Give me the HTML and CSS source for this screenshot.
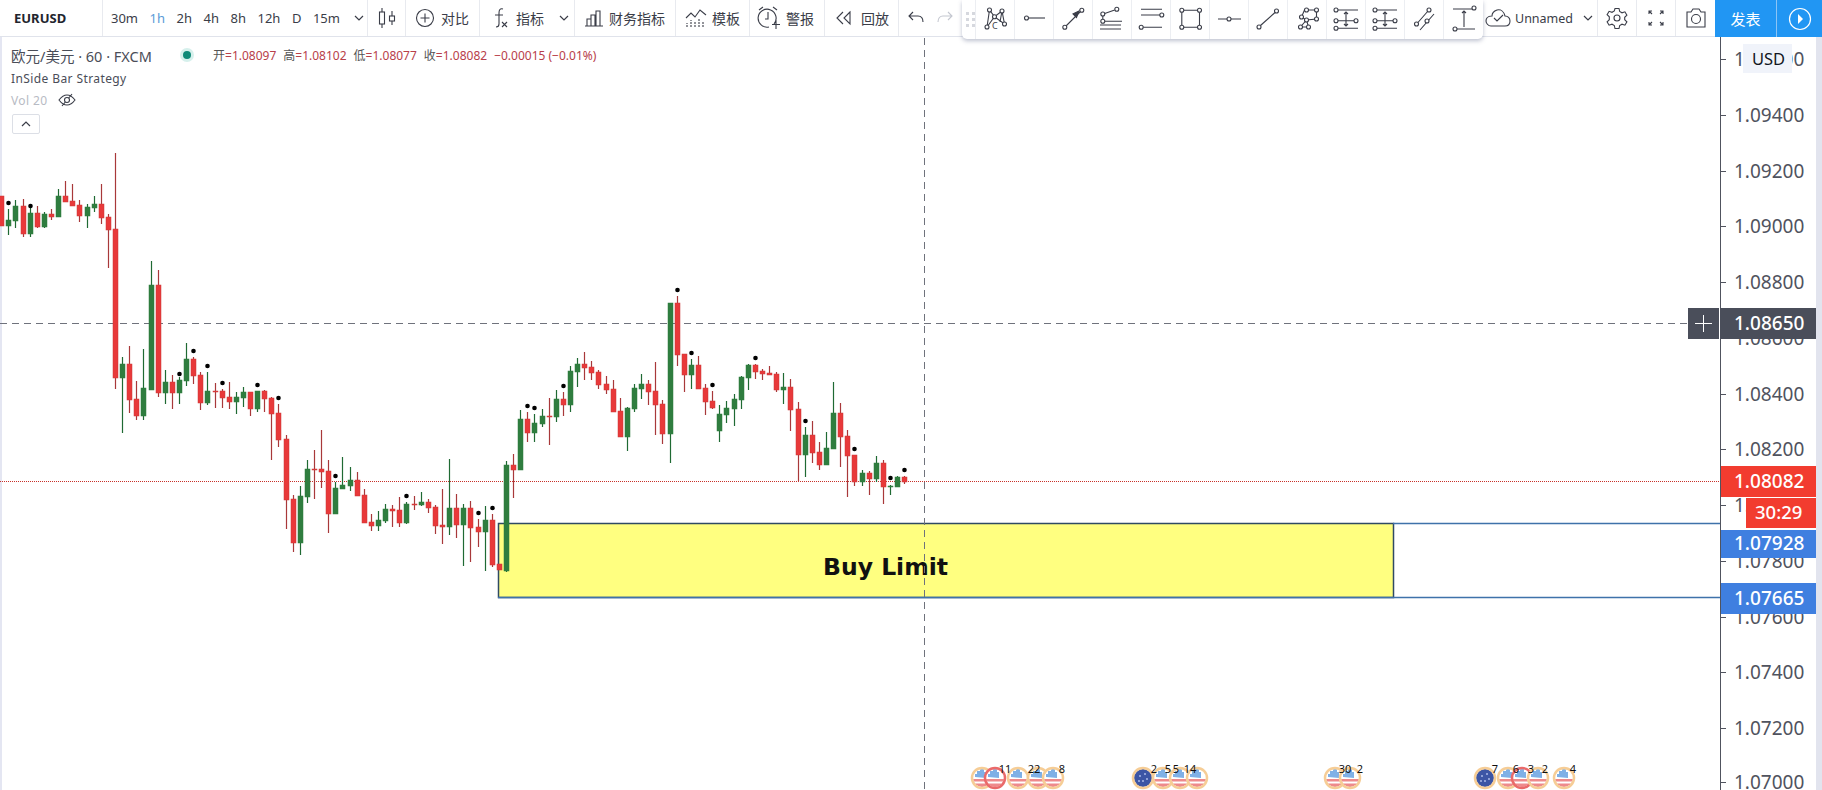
FILE: index.html
```html
<!DOCTYPE html>
<html lang="zh">
<head>
    <meta charset="UTF-8">
    <title>EURUSD</title>
    <link rel="stylesheet" href="styles.css">
</head>
<body>
<div class="header">
    <div class="group sym">EURUSD</div>
    <div class="group tf">
        <span class="tf-item w30">30m</span>
        <span class="tf-item active">1h</span>
        <span class="tf-item">2h</span>
        <span class="tf-item">4h</span>
        <span class="tf-item">8h</span>
        <span class="tf-item">12h</span>
        <span class="tf-item">D</span>
        <span class="tf-item">15m</span>
        <svg class="chev" viewBox="0 0 10 6"><path d="M1 1l4 4 4-4"/></svg>
    </div>
    <div class="group candle">
        <svg class="ic" width="22" height="24" viewBox="0 0 22 24"><path d="M6 2v4M6 18v4M16 5v5M16 15v4"/><rect x="3.5" y="6" width="5" height="12"/><rect x="13.5" y="10" width="5" height="5"/></svg>
    </div>
    <div class="group compare">
        <svg class="ic" width="20" height="20" viewBox="0 0 20 20"><circle cx="10" cy="10" r="8.5"/><path d="M10 5.500v9M5.500 10h9"/></svg>
        <span>对比</span>
    </div>
    <div class="group ind">
        <svg class="ic" width="22" height="24" viewBox="0 0 22 24"><path d="M14 3c-3-1-4 1-4 4v11c0 2-1 3-3 3M6 9h8M13 16l5 5M18 16l-5 5"/></svg>
        <span>指标</span>
        <svg class="chev" viewBox="0 0 10 6"><path d="M1 1l4 4 4-4"/></svg>
    </div>
    <div class="group fin">
        <svg class="ic" width="20" height="20" viewBox="0 0 20 20"><path d="M1 18h18M3 18v-7h4v7M7 18V7h4v11M12 18V3h4v15"/></svg>
        <span>财务指标</span>
    </div>
    <div class="group tmpl">
        <svg class="ic" width="22" height="22" viewBox="0 0 22 22"><path d="M1 11l5-5 4 4 5-7 6 5"/><path d="M2 20v-4M6 20v-7M10 20v-5M14 20v-8M18 20v-5" stroke-dasharray="2 1"/></svg>
        <span>模板</span>
    </div>
    <div class="group alert">
        <svg class="ic" width="26" height="24" viewBox="0 0 26 24"><path d="M17 18a9 9 0 1 0-5 3M11 6v7h-3M2 4l4-3M16 1l4 3M19 14v9M15 18.500h8"/></svg>
        <span>警报</span>
    </div>
    <div class="group replay">
        <svg class="ic" width="18" height="16" viewBox="0 0 18 16"><path d="M8 2L2 8l6 6M15 2L9 8l6 6z"/></svg>
        <span>回放</span>
    </div>
    <div class="group undo">
        <svg class="ic" width="18" height="16" viewBox="0 0 18 16"><path d="M6 2L2 6l4 4M2 6h9c3 0 5 2 5 6"/></svg>
        <svg class="ic off" width="18" height="16" viewBox="0 0 18 16"><path d="M12 2l4 4-4 4M16 6H7c-3 0-5 2-5 6"/></svg>
    </div>
    <div class="spacer"></div>
    <div class="group save">
        <svg class="ic" width="26" height="22" viewBox="0 0 26 22"><path d="M6 19h14c3 0 5-2 5-5s-2-5-5-5c-1-4-4-7-8-6-3 1-5 3-5 6-5 0-6 3-6 5s2 5 5 5zM9 11l3 3 6-6"/></svg>
        <span>Unnamed</span>
        <svg class="chev" viewBox="0 0 10 6"><path d="M1 1l4 4 4-4"/></svg>
    </div>
    <div class="group btn">
        <svg class="ic" width="22" height="22" viewBox="0 0 22 22"><path d="M9 1.500h4l.7 3 2.300 1.300 2.900-1 2 3.400-2.200 2.100v2.400l2.200 2.100-2 3.400-2.900-1-2.300 1.300-.7 3H9l-.7-3-2.300-1.300-2.900 1-2-3.400 2.200-2.100V9.800L1.100 7.700l2-3.400 2.900 1 2.300-1.300z"/><circle cx="11" cy="11" r="3"/></svg>
    </div>
    <div class="group btn">
        <svg class="ic" width="18" height="18" viewBox="0 0 18 18"><path d="M2 5V2h3M13 2h3v3M2 13v3h3M16 13v3h-3M2 2l3 3M16 2l-3 3M2 16l3-3M16 16l-3-3"/></svg>
    </div>
    <div class="group btn last">
        <svg class="ic" width="22" height="20" viewBox="0 0 22 20"><path d="M2 4h4l2-3h6l2 3h4v15H2z"/><circle cx="11" cy="11" r="4.500"/></svg>
    </div>
    <div class="publish">发表</div>
    <div class="play">
        <svg width="24" height="24" viewBox="0 0 24 24"><circle cx="12" cy="12" r="10.500"/><path d="M10 7l5 5-5 5z"/></svg>
    </div>

    <div class="draw-bar">
        <div class="grip"><i></i><i></i><i></i><i></i><i></i><i></i></div>
        <div class="cell"><svg class="ic" viewBox="0 0 30 30"><path d="M9.500 7l5 6.700L22 8l2.500 13-10-7.300L7 24l2.500-17M22 8l-2 11"/><circle cx="9.500" cy="7" r="2"/><circle cx="22" cy="8" r="2"/><circle cx="14.500" cy="13.700" r="2"/><circle cx="24.500" cy="21" r="2"/><circle cx="7" cy="24" r="2"/><text class="ic-c" x="12" y="26">C</text></svg></div>
        <div class="cell"><svg class="ic" viewBox="0 0 30 30"><path d="M9.500 15H26"/><circle cx="7.500" cy="15" r="2"/></svg></div>
        <div class="cell"><svg class="ic" viewBox="0 0 30 30"><path d="M8 23L22.500 8.500"/><path class="solid" d="M21 8l-6 3 3.500 3.500z"/><circle cx="6.800" cy="24.300" r="2"/><circle cx="23.800" cy="7.300" r="2"/></svg></div>
        <div class="cell"><svg class="ic" viewBox="0 0 30 30"><path d="M8 18.300h17M3 22h21M3 26h21M7.700 10.400l10-3.500M5.800 13v3"/><circle cx="5.800" cy="11" r="2"/><circle cx="19.800" cy="6.300" r="2"/><circle cx="5.800" cy="18.300" r="2"/></svg></div>
        <div class="cell"><svg class="ic" viewBox="0 0 30 30"><path d="M5 6.300h21M5 12h19M7 24.300h19"/><circle cx="25.800" cy="12" r="2"/><circle cx="5.200" cy="24.300" r="2"/></svg></div>
        <div class="cell"><svg class="ic" viewBox="0 0 30 30"><path d="M9 7.300h13.500M9 24.300h13.500M6.800 9.300v13M24.500 9.300v13"/><circle cx="6.800" cy="7.300" r="2"/><circle cx="24.500" cy="7.300" r="2"/><circle cx="6.800" cy="24.300" r="2"/><circle cx="24.500" cy="24.300" r="2"/></svg></div>
        <div class="cell"><svg class="ic" viewBox="0 0 30 30"><path d="M4 16h9M17 16h10"/><circle cx="15" cy="16" r="2"/></svg></div>
        <div class="cell"><svg class="ic" viewBox="0 0 30 30"><path d="M7.500 22.500L22 9.500"/><circle cx="6" cy="24" r="2"/><circle cx="23.500" cy="8" r="2"/></svg></div>
        <div class="cell"><svg class="ic" viewBox="0 0 30 30"><path d="M14.500 7h10v9l-10 1-6 7h8l-2-7-5-3 3-7"/><circle cx="9.500" cy="14" r="2"/><circle cx="14.500" cy="7" r="2"/><circle cx="24.500" cy="7" r="2"/><circle cx="24.500" cy="16" r="2"/><circle cx="14.500" cy="17" r="2"/><circle cx="8.500" cy="24" r="2"/><circle cx="16.500" cy="24" r="2"/></svg></div>
        <div class="cell"><svg class="ic" viewBox="0 0 30 30"><path d="M7 7h20M7 17.700h16M7 25.300h20M15 9v14M13 11l2-2 2 2M13 21l2 2 2-2"/><circle cx="5" cy="7" r="2"/><circle cx="5" cy="17.700" r="2"/><circle cx="5" cy="25.300" r="2"/><circle cx="25" cy="17.700" r="2"/></svg></div>
        <div class="cell"><svg class="ic" viewBox="0 0 30 30"><path d="M7 7h20M7 17.700h16M7 25.300h20M15 9v14M13 11l2-2 2 2M13 21l2 2 2-2"/><circle cx="5" cy="7" r="2"/><circle cx="5" cy="17.700" r="2"/><circle cx="5" cy="25.300" r="2"/><circle cx="25" cy="17.700" r="2"/></svg></div>
        <div class="cell"><svg class="ic" viewBox="0 0 30 30"><path d="M8.500 20L19 8M11 27l14-16"/><circle cx="7.500" cy="21" r="2"/><circle cx="20" cy="7" r="2"/><circle cx="18" cy="18" r="2"/></svg></div>
        <div class="cell"><svg class="ic" viewBox="0 0 30 30"><path d="M4 6h19M8 26h18M15 8v16M13 10l2-2 2 2"/><circle cx="25" cy="5" r="2"/><circle cx="6" cy="26" r="2"/></svg></div>
    </div>
</div>

<div class="chart">
    <svg class="plot" width="1822" height="753" viewBox="0 37 1822 753">
        <defs>
            <clipPath id="pin-clip"><circle cx="0" cy="0" r="9"/></clipPath>
            <symbol id="pin-us" overflow="visible">
                <g clip-path="url(#pin-clip)">
                    <rect x="-9" y="-9" width="18" height="18" fill="#fff"/>
                    <path d="M-7-1V-4h2v-3h3v-2h4v3h2v6z" fill="#7fb0e6"/>
                    <rect x="-9" y="1" width="18" height="2.500" fill="#ee8a8c"/>
                    <rect x="-9" y="5.500" width="18" height="3.500" fill="#ee8a8c"/>
                </g>
            </symbol>
            <symbol id="pin-eu" overflow="visible">
                <g clip-path="url(#pin-clip)">
                    <rect x="-9" y="-9" width="18" height="18" fill="#3c55a5"/>
                    <circle cx="-3" cy="-2" r="1" fill="#aab8e8"/><circle cx="2" cy="-4" r="1" fill="#aab8e8"/>
                    <circle cx="4" cy="1" r="1" fill="#aab8e8"/><circle cx="0" cy="3" r="1" fill="#aab8e8"/>
                    <circle cx="-4" cy="3" r="1" fill="#aab8e8"/>
                </g>
            </symbol>
        </defs>

        <rect class="left-edge" x="0" y="37" width="2" height="753"/>

        <!-- buy limit zone -->
        <rect class="zone" x="498.500" y="523.500" width="895" height="74"/>
        <path class="zone-line" d="M1393 523.500H1720M498 597.500H1720"/>
        <text class="zone-text" x="823" y="575">Buy Limit</text>

        <path class="price-line" d="M0 481.500H1720"/>
        <path class="cross" d="M924.500 38V790M0 323.500H1720"/>

        <g id="candles"></g>
        <g id="pins"></g>

        <!-- price scale -->
        <rect class="scale-bg" x="1721" y="37" width="95" height="753"/>
        <rect class="scale-strip" x="1816" y="37" width="6" height="753"/>
        <g id="scale"></g>
        <path class="scale-line" d="M1720.500 37V790"/>

        <rect class="usd-box" x="1743" y="44" width="49" height="29"/>
        <text class="usd" x="1752" y="65">USD</text>

        <rect class="tag dark" x="1688" y="308" width="128" height="31"/>
        <path class="plus" d="M1695 323.500h17M1703.500 315v17"/>
        <path class="tag-sep" d="M1719.500 308V339"/>
        <text class="tag-text" x="1734" y="330">1.08650</text>

        <rect class="tag red" x="1721" y="466" width="95" height="31"/>
        <text class="tag-text" x="1734" y="488">1.08082</text>
        <rect class="tag red" x="1746" y="498" width="70" height="30"/>
        <text class="tag-text small" x="1755" y="519">30:29</text>

        <rect class="tag blue" x="1721" y="530" width="95" height="28"/>
        <text class="tag-text" x="1734" y="550">1.07928</text>
        <rect class="tag blue" x="1721" y="583" width="95" height="31"/>
        <text class="tag-text" x="1734" y="605">1.07665</text>
    </svg>

    <div class="legend">
        <div class="legend-title">
            <span class="pair">欧元/美元 · 60 · FXCM</span>
            <span class="status"></span>
            <span class="ohlc">开<b>=1.08097</b></span>
            <span class="ohlc">高<b>=1.08102</b></span>
            <span class="ohlc">低<b>=1.08077</b></span>
            <span class="ohlc">收<b>=1.08082</b></span>
            <span class="ohlc"><b>−0.00015 (−0.01%)</b></span>
        </div>
        <div class="legend-row">InSide Bar Strategy</div>
        <div class="legend-row vol">Vol 20
            <svg class="ic" width="18" height="14" viewBox="0 0 18 14"><path d="M1 7c3-4 5-5 8-5s5 1 8 5c-3 4-5 5-8 5s-5-1-8-5zM14 1L4 13"/><circle cx="9" cy="7" r="2.500"/></svg>
        </div>
        <div class="collapse"><svg viewBox="0 0 10 6"><path d="M1 5l4-4 4 4"/></svg></div>
    </div>
</div>
<script src="chart.js"></script>
</body>
</html>
```

FILE: styles.css
```css
*{
    box-sizing: border-box;
}
html, body{
    margin: 0;
    height: 100%;
    overflow: hidden;
    background-color: white;
    font-family: "Noto Sans", "Noto Sans CJK SC", sans-serif;
    color: #3a3d48;
}
.header{
    position: relative;
    display: flex;
    height: 37px;
    border-bottom: 1px solid #e0e3eb;
    font-size: 14px;
}
.group{
    display: flex;
    align-items: center;
    height: 36px;
    border-right: 1px solid #e8eaef;
    flex-shrink: 0;
}
.spacer{
    flex: 1;
}
.sym{
    width: 103px;
    padding-left: 14px;
    font-size: 13px;
    font-weight: bold;
    color: #22252e;
}
.tf{
    width: 265px;
    padding-left: 8px;
    font-size: 13px;
}
.tf-item{
    margin-left: 11.500px;
}
.w30{
    margin-left: 0;
}
.active{
    color: #5a9bd8;
}
.chev{
    width: 10px;
    height: 6px;
    margin-left: 14px;
}
.chev path, .collapse path{
    fill: none;
    stroke: #3a3d48;
    stroke-width: 1.200;
}
.ic{
    fill: none;
    stroke: #3a3d48;
    stroke-width: 1.100;
}
.ic circle{
    fill: white;
}
.ic .solid{
    fill: #3a3d48;
}
.ic-c{
    fill: #3a3d48;
    stroke: none;
    font-size: 9px;
}
.off{
    stroke: #c4c7d0;
}
.candle{
    width: 38px;
    justify-content: center;
}
.compare{
    width: 74px;
    padding-left: 9px;
    gap: 6px;
}
.ind{
    width: 95px;
    padding-left: 9px;
    gap: 5px;
}
.ind .chev{
    margin-left: 10px;
}
.fin{
    width: 101px;
    padding-left: 9px;
    gap: 5px;
}
.tmpl{
    width: 74px;
    padding-left: 9px;
    gap: 5px;
}
.alert{
    width: 75px;
    padding-left: 7px;
    gap: 3px;
}
.replay{
    width: 74px;
    padding-left: 10px;
    gap: 8px;
}
.undo{
    width: 64px;
    padding-left: 8px;
    gap: 11px;
    border-right: none;
}
.save{
    width: 115px;
    padding-left: 2px;
    gap: 4px;
    font-size: 12.500px;
}
.save .chev{
    margin-left: 6px;
}
.btn{
    width: 39px;
    justify-content: center;
}
.last{
    border-right: none;
}
.publish{
    display: flex;
    align-items: center;
    justify-content: center;
    width: 62px;
    height: 37px;
    background-color: #2196f3;
    border-right: 1px solid #8cc4f5;
    color: white;
    font-size: 15px;
}
.play{
    display: flex;
    align-items: center;
    justify-content: center;
    width: 45px;
    height: 37px;
    background-color: #2196f3;
}
.play circle{
    fill: none;
    stroke: white;
    stroke-width: 1.200;
}
.play path{
    fill: white;
}
.draw-bar{
    position: absolute;
    left: 962px;
    top: 0;
    display: flex;
    height: 39px;
    background-color: white;
    border-radius: 0 0 5px 5px;
    box-shadow: 0 2px 4px rgba(70, 80, 120, 0.35);
    z-index: 2;
}
.grip{
    display: grid;
    grid-template-columns: 3px 3px;
    gap: 3px;
    align-content: center;
    width: 14px;
    padding-left: 4px;
    border-right: 1px solid #eceef2;
}
.grip i{
    width: 3px;
    height: 3px;
    background-color: #d6d8de;
}
.cell{
    display: flex;
    align-items: center;
    justify-content: center;
    width: 39px;
    border-right: 1px solid #eceef2;
    padding-bottom: 3px;
}
.cell:last-child{
    border-right: none;
}
.cell svg{
    width: 30px;
    height: 30px;
}
.chart{
    position: relative;
    height: 753px;
}
.plot{
    display: block;
}
.left-edge{
    fill: #e4e6f2;
}
.zone{
    fill: #ffff80;
    stroke: #2f4a63;
    stroke-width: 1.500;
}
.zone-line{
    fill: none;
    stroke: #3f72aa;
    stroke-width: 1.500;
}
.zone-text{
    font-family: "DejaVu Sans", sans-serif;
    font-weight: bold;
    font-size: 23.500px;
    fill: #111;
}
.price-line{
    stroke: #c8302a;
    stroke-width: 1;
    stroke-dasharray: 1 1;
}
.cross{
    fill: none;
    stroke: #6f727c;
    stroke-width: 1;
    stroke-dasharray: 7 5;
}
.wick-g{
    stroke: #1f6a33;
    stroke-width: 1.200;
}
.wick-r{
    stroke: #a8383a;
    stroke-width: 1.200;
}
.body-g{
    fill: #2f7d3f;
    stroke: #2f7d3f;
    stroke-width: 0.500;
}
.body-r{
    fill: #e8393a;
    stroke: #c93a3a;
    stroke-width: 0.500;
}
.dot{
    fill: #000;
}
.pin-ring{
    fill: none;
    stroke: #f6cd96;
    stroke-width: 2.500;
}
.pin-ring.hot{
    stroke: #ea6a6a;
}
.pin-num{
    font-size: 11px;
    fill: #111;
    text-anchor: middle;
}
.scale-bg{
    fill: white;
}
.scale-strip{
    fill: #e2e4ee;
}
.scale-line{
    stroke: #50535e;
    stroke-width: 1;
}
.tick{
    stroke: #50535e;
    stroke-width: 1;
}
.scale-label{
    font-size: 19px;
    fill: #50535e;
}
.usd-box{
    fill: #f0f3fa;
}
.usd{
    font-size: 16.500px;
    fill: #131722;
}
.tag.dark{
    fill: #4a4e5a;
}
.tag.red{
    fill: #f23c2f;
}
.tag.blue{
    fill: #3f7fe0;
}
.plus{
    stroke: white;
    stroke-width: 1;
}
.tag-sep{
    stroke: white;
    stroke-width: 1;
}
.tag-text{
    font-size: 19px;
    font-weight: 500;
    fill: white;
}
.tag-text.small{
    font-size: 18.500px;
}
.legend{
    position: absolute;
    left: 11px;
    top: 7px;
}
.legend-title{
    display: flex;
    align-items: center;
    height: 22px;
    font-size: 12px;
    color: #555;
}
.pair{
    width: 163px;
    font-size: 14.500px;
    color: #4a4d58;
}
.status{
    width: 8px;
    height: 8px;
    margin-left: 9px;
    margin-right: 22px;
    border-radius: 50%;
    background-color: #0f8a78;
    box-shadow: 0 0 0 3px #d6f0ec;
}
.ohlc{
    margin-right: 7px;
}
.ohlc b{
    font-weight: normal;
    color: #b8404a;
}
.legend-row{
    display: flex;
    align-items: center;
    height: 20px;
    margin-top: 2px;
    font-size: 12px;
    letter-spacing: 0.400px;
    color: #4a4d58;
}
.vol{
    color: #b8bbc4;
    gap: 10px;
}
.collapse{
    display: flex;
    align-items: center;
    justify-content: center;
    width: 28px;
    height: 20px;
    margin-top: 4px;
    margin-left: 1px;
    border: 1px solid #dcdfe6;
    border-radius: 2px;
}
.collapse svg{
    width: 10px;
    height: 6px;
}
```

FILE: chart.js
```js
// kind, high, body top, body bottom, low, dot y (pixels on the page)
var bars = [
    ["r",196,196,226,226],["g",209,220,226,235,203],["g",200,206,221,228],["r",199,206,234,237],
    ["g",208,213,234,237,206],["r",206,213,227,228],["g",212,214,227,228],["r",209,214,217,220],
    ["g",189,196,217,217],["r",181,196,202,202],["r",184,201,206,206],["r",200,205,216,222],
    ["g",204,207,216,228],["g",196,204,208,212],["r",184,204,218,224],["r",214,217,230,268],
    ["r",153,229,378,389],["g",357,364,378,433],["r",346,364,400,413],["r",381,399,416,420],
    ["g",349,388,416,420],["g",261,285,390,390],["r",270,285,393,397],["g",370,382,393,404],
    ["r",375,382,393,409],["g",377,380,393,404,374],["g",343,359,381,386],["r",357,359,376,384,351],
    ["r",372,375,403,410],["g",372,391,403,405,366],["r",383,391,392,408],["r",389,391,398,408,383],
    ["r",382,397,402,409],["g",392,397,402,414],["g",387,392,398,407],["r",392,392,409,416],
    ["g",391,391,409,412,385],["r",390,391,399,412],["r",397,398,414,460],["r",404,413,440,447,398],
    ["r",435,439,500,529],["r",495,499,543,552],["g",486,496,543,555],["g",460,469,497,503],
    ["r",450,469,470,499],["r",430,469,472,488],["r",460,471,514,533],["g",482,488,514,514,476],
    ["g",457,485,489,489],["g",467,480,486,491],["r",472,480,496,496],["r",489,495,523,523],
    ["r",514,522,526,531],["g",511,520,526,531],["g",504,509,521,523],["r",505,509,511,527],
    ["r",497,510,523,527],["g",502,504,523,524,496],["r",496,504,505,510],["g",492,502,505,506],
    ["r",499,502,508,513],["r",505,507,526,534],["r",489,525,527,544],["g",459,508,527,535],
    ["r",494,508,525,538],["g",504,508,525,566],["r",501,508,528,562],["r",519,527,532,547,513],
    ["g",506,520,532,571],["r",514,520,565,567,508],["r",564,564,570,570],["g",461,465,571,572],
    ["r",454,465,470,498],["g",410,419,470,470],["r",412,419,433,442,406],["g",414,423,433,442,408],
    ["g",409,416,424,427],["r",398,416,417,445],["g",390,399,417,422],["r",392,399,405,416,386],
    ["g",366,371,405,412],["g",358,364,372,387],["r",352,364,368,380],["r",361,367,373,380],
    ["r",370,372,385,389],["r",376,384,390,394],["r",380,389,412,412],["r",398,411,437,437],
    ["g",407,408,437,451],["g",384,388,409,412],["g",374,384,389,399],["r",380,384,392,405],
    ["r",362,391,405,435],["r",400,404,434,444],["g",303,303,434,463],["r",296,303,355,366,290],
    ["r",354,354,375,392],["g",359,365,375,389,353],["r",356,365,389,389],["r",384,388,402,415],
    ["r",391,401,408,409,385],["g",405,414,431,442],["g",401,408,415,423],["g",394,399,409,426],
    ["g",376,377,400,409],["g",364,365,378,390],["r",364,365,372,379,358],["r",369,371,374,380],
    ["r",366,373,375,375],["r",372,374,390,392],["g",373,387,390,404],["r",379,387,410,431],
    ["r",402,409,455,481],["g",427,435,455,477,421],["r",421,435,453,463],["r",442,452,465,470],
    ["g",432,448,465,465],["g",382,413,449,449],["r",403,413,437,467],["r",430,436,456,497],
    ["r",455,455,482,486,449],["g",470,473,482,486],["r",471,473,479,495],["g",456,463,479,482],
    ["r",460,463,487,504],["g",485,486,487,495,478],["g",476,477,487,487],["r",476,477,482,484,470]
];

var levels = [
    ["1.09600",59],["1.09400",115],["1.09200",171],["1.09000",226],["1.08800",282],["1.08600",338],
    ["1.08400",394],["1.08200",449],["1.08000",505],["1.07800",561],["1.07600",617],["1.07400",672],
    ["1.07200",728],["1.07000",782]
];

// x, flag, hot ring
var pins = [
    [982,"us"],[995,"us",true],[1018,"us"],[1038,"us"],[1053,"us"],
    [1143,"eu"],[1163,"us"],[1180,"us"],[1197,"us"],
    [1335,"us"],[1350,"us"],
    [1485,"eu"],[1508,"us"],[1522,"us",true],[1538,"us"],[1564,"us"]
];

var pinNumbers = [
    ["11",1005],["22",1034],["8",1062],["2",1154],["5",1168],["5",1176],["14",1190],
    ["30",1345],["2",1360],["7",1495],["6",1516],["3",1531],["2",1545],["4",1573]
];

var NS = "http://www.w3.org/2000/svg";

function add(parent, tag, attrs, text){
    var el = document.createElementNS(NS, tag);
    for(var k in attrs) el.setAttribute(k, attrs[k]);
    if(text) el.textContent = text;
    parent.appendChild(el);
    return el;
}

var candles = document.querySelector("#candles");
bars.forEach(function(b, i){
    var x = Math.round(1.2 + 7.11 * i) + 0.5;
    add(candles, "line", {"class": "wick-" + b[0], x1: x, x2: x, y1: b[1], y2: b[4]});
    add(candles, "rect", {"class": "body-" + b[0], x: x - 2.5, y: b[2], width: 5, height: Math.max(b[3] - b[2], 1)});
    if(b[5]) add(candles, "circle", {"class": "dot", cx: x, cy: b[5], r: 2.3});
});

var pinLayer = document.querySelector("#pins");
pins.forEach(function(p){
    var g = add(pinLayer, "g", {transform: "translate(" + p[0] + " 778)"});
    add(g, "use", {href: "#pin-" + p[1]});
    add(g, "circle", {"class": p[2] ? "pin-ring hot" : "pin-ring", r: 10});
});
pinNumbers.forEach(function(n){
    add(pinLayer, "text", {"class": "pin-num", x: n[1], y: 773}, n[0]);
});

var scale = document.querySelector("#scale");
levels.forEach(function(l){
    add(scale, "line", {"class": "tick", x1: 1720, x2: 1726, y1: l[1] + 0.5, y2: l[1] + 0.5});
    add(scale, "text", {"class": "scale-label", x: 1734, y: l[1] + 7}, l[0]);
});
```
